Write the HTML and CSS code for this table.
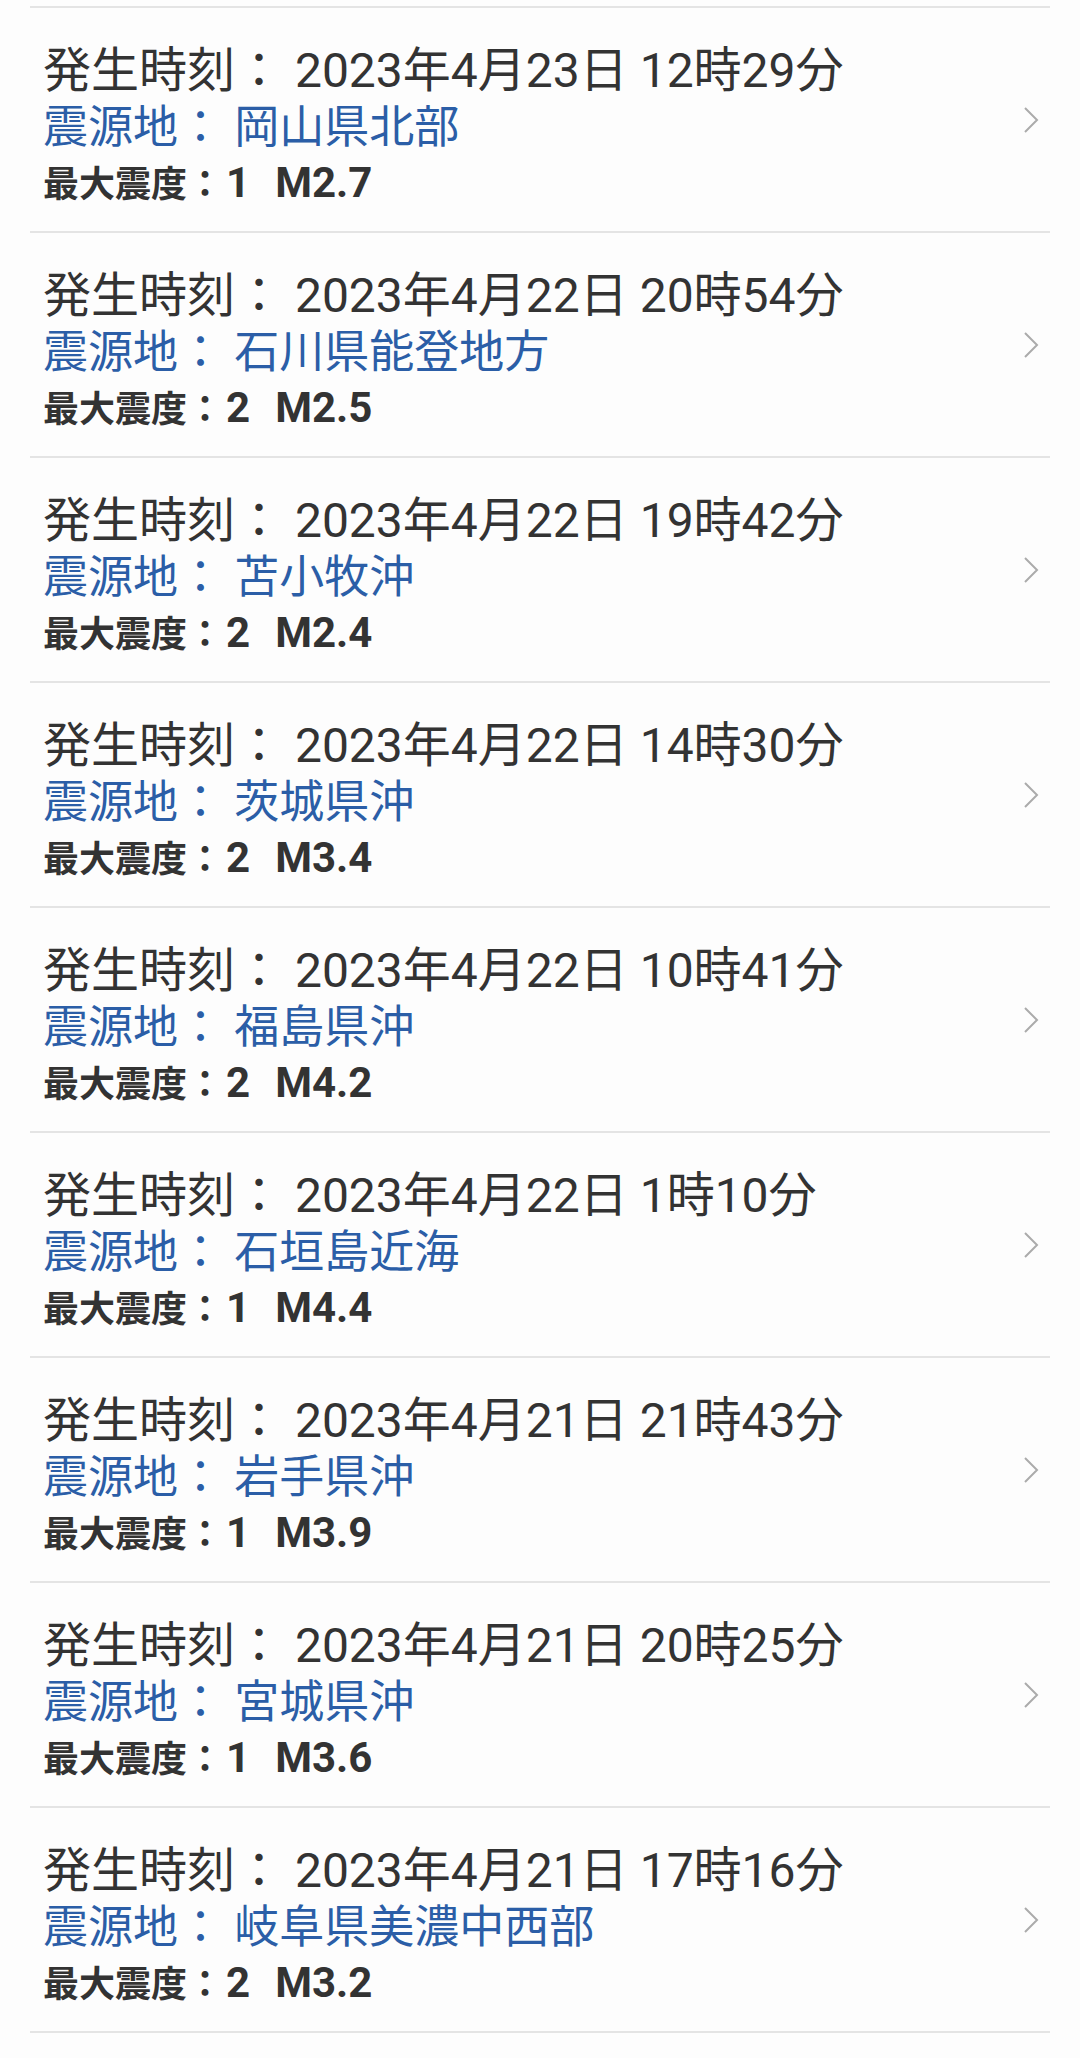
FILE: index.html
```html
<!DOCTYPE html>
<html lang="ja">
<head>
  <meta charset="UTF-8" />
  <meta name="viewport" content="width=device-width, initial-scale=1.0"/>
  <title>地震情報</title>
  <link rel="stylesheet" href="styles.css">
</head>
<body>
  <ul class="quake-list">
    <li class="quake">
      <div class="info">
        <p class="time">発生時刻： 2023年4月23日 12時29分</p>
        <p class="place">震源地： 岡山県北部</p>
        <p class="scale"><span class="label">最大震度：</span><span class="value">1<span class="mag">M2.7</span></span></p>
      </div>
      <svg class="chevron" viewBox="0 0 16 28"><polyline points="2,2 14,14 2,26"/></svg>
    </li>
    <li class="quake">
      <div class="info">
        <p class="time">発生時刻： 2023年4月22日 20時54分</p>
        <p class="place">震源地： 石川県能登地方</p>
        <p class="scale"><span class="label">最大震度：</span><span class="value">2<span class="mag">M2.5</span></span></p>
      </div>
      <svg class="chevron" viewBox="0 0 16 28"><polyline points="2,2 14,14 2,26"/></svg>
    </li>
    <li class="quake">
      <div class="info">
        <p class="time">発生時刻： 2023年4月22日 19時42分</p>
        <p class="place">震源地： 苫小牧沖</p>
        <p class="scale"><span class="label">最大震度：</span><span class="value">2<span class="mag">M2.4</span></span></p>
      </div>
      <svg class="chevron" viewBox="0 0 16 28"><polyline points="2,2 14,14 2,26"/></svg>
    </li>
    <li class="quake">
      <div class="info">
        <p class="time">発生時刻： 2023年4月22日 14時30分</p>
        <p class="place">震源地： 茨城県沖</p>
        <p class="scale"><span class="label">最大震度：</span><span class="value">2<span class="mag">M3.4</span></span></p>
      </div>
      <svg class="chevron" viewBox="0 0 16 28"><polyline points="2,2 14,14 2,26"/></svg>
    </li>
    <li class="quake">
      <div class="info">
        <p class="time">発生時刻： 2023年4月22日 10時41分</p>
        <p class="place">震源地： 福島県沖</p>
        <p class="scale"><span class="label">最大震度：</span><span class="value">2<span class="mag">M4.2</span></span></p>
      </div>
      <svg class="chevron" viewBox="0 0 16 28"><polyline points="2,2 14,14 2,26"/></svg>
    </li>
    <li class="quake">
      <div class="info">
        <p class="time">発生時刻： 2023年4月22日 1時10分</p>
        <p class="place">震源地： 石垣島近海</p>
        <p class="scale"><span class="label">最大震度：</span><span class="value">1<span class="mag">M4.4</span></span></p>
      </div>
      <svg class="chevron" viewBox="0 0 16 28"><polyline points="2,2 14,14 2,26"/></svg>
    </li>
    <li class="quake">
      <div class="info">
        <p class="time">発生時刻： 2023年4月21日 21時43分</p>
        <p class="place">震源地： 岩手県沖</p>
        <p class="scale"><span class="label">最大震度：</span><span class="value">1<span class="mag">M3.9</span></span></p>
      </div>
      <svg class="chevron" viewBox="0 0 16 28"><polyline points="2,2 14,14 2,26"/></svg>
    </li>
    <li class="quake">
      <div class="info">
        <p class="time">発生時刻： 2023年4月21日 20時25分</p>
        <p class="place">震源地： 宮城県沖</p>
        <p class="scale"><span class="label">最大震度：</span><span class="value">1<span class="mag">M3.6</span></span></p>
      </div>
      <svg class="chevron" viewBox="0 0 16 28"><polyline points="2,2 14,14 2,26"/></svg>
    </li>
    <li class="quake">
      <div class="info">
        <p class="time">発生時刻： 2023年4月21日 17時16分</p>
        <p class="place">震源地： 岐阜県美濃中西部</p>
        <p class="scale"><span class="label">最大震度：</span><span class="value">2<span class="mag">M3.2</span></span></p>
      </div>
      <svg class="chevron" viewBox="0 0 16 28"><polyline points="2,2 14,14 2,26"/></svg>
    </li>
  </ul>
</body>
</html>
```

FILE: styles.css
```css
body {
  margin: 0;
  padding: 0;
  background: #fdfdfd;
  font-family: Roboto, "Noto Sans CJK JP", sans-serif;
  color: #333;
}

.quake-list {
  list-style: none;
  margin: 6px 30px 0;
  padding: 0;
  border-top: 2px solid #e4e4e4;
}

.quake {
  display: flex;
  align-items: center;
  height: 223px;
  border-bottom: 2px solid #e4e4e4;
}

.info {
  flex: 1;
  align-self: flex-start;
  padding: 34px 0 0 13px;
}

.info p {
  margin: 0;
  white-space: pre;
}

.time {
  font-size: 48px;
  line-height: 57px;
  color: #333;
}

.place {
  font-size: 45px;
  line-height: 57px;
  color: #2b5ea7;
}

.scale {
  font-size: 36px;
  line-height: 54px;
  font-weight: bold;
  color: #333;
}

.scale .value {
  font-size: 42px;
  margin-left: 3px;
}

.scale .mag {
  margin-left: 25px;
}

.chevron {
  width: 16px;
  height: 28px;
  margin-right: 11px;
  fill: none;
  stroke: #ababab;
  stroke-width: 2;
}
```
